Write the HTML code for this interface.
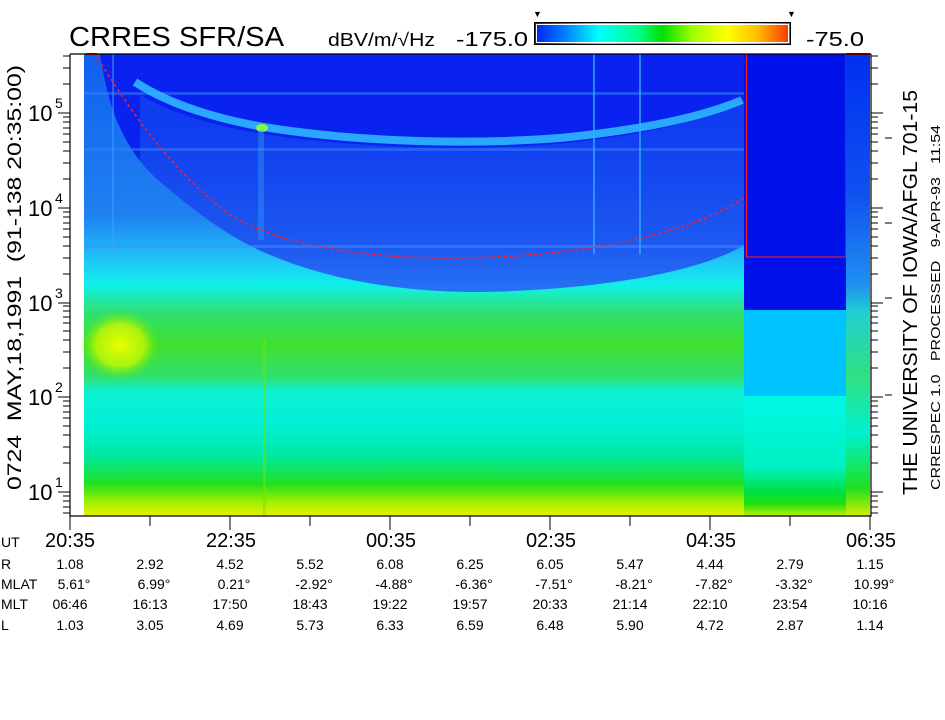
<!DOCTYPE html>
<html><head><meta charset="utf-8"><style>
html,body{margin:0;padding:0;background:#fff;width:945px;height:720px;overflow:hidden}
svg{display:block}
text{font-family:"Liberation Sans",sans-serif;fill:#000;white-space:pre}
</style></head><body>
<svg width="945" height="720" viewBox="0 0 945 720" xmlns="http://www.w3.org/2000/svg">
<defs>
<linearGradient id="cb" x1="0" x2="1" y1="0" y2="0">
<stop offset="0" stop-color="#0020f0"/><stop offset="0.12" stop-color="#0080ff"/><stop offset="0.25" stop-color="#00ffff"/>
<stop offset="0.4" stop-color="#00ff90"/><stop offset="0.5" stop-color="#00e000"/><stop offset="0.62" stop-color="#a0ff00"/>
<stop offset="0.75" stop-color="#ffff00"/><stop offset="0.87" stop-color="#ffc000"/><stop offset="1" stop-color="#ff3000"/>
</linearGradient>
<linearGradient id="low" x1="0" x2="0" y1="54" y2="516" gradientUnits="userSpaceOnUse">
<stop offset="0" stop-color="#1060f0"/>
<stop offset="0.35" stop-color="#2080f0"/>
<stop offset="0.45" stop-color="#20c8f8"/>
<stop offset="0.5" stop-color="#10f0e8"/>
<stop offset="0.56" stop-color="#30e070"/>
<stop offset="0.63" stop-color="#40e030"/>
<stop offset="0.7" stop-color="#30e070"/>
<stop offset="0.73" stop-color="#10f0d0"/>
<stop offset="0.8" stop-color="#00f0d8"/>
<stop offset="0.87" stop-color="#00e8a0"/>
<stop offset="0.93" stop-color="#20e020"/>
<stop offset="0.97" stop-color="#a0f000"/>
<stop offset="1" stop-color="#e8f000"/>
</linearGradient>
<linearGradient id="mid" x1="0" x2="0" y1="130" y2="300" gradientUnits="userSpaceOnUse">
<stop offset="0" stop-color="#1040f0"/><stop offset="0.7" stop-color="#2060f0"/><stop offset="1" stop-color="#2a80f4"/>
</linearGradient>
<linearGradient id="blk" x1="0" x2="0" y1="396" y2="516" gradientUnits="userSpaceOnUse">
<stop offset="0" stop-color="#00f8e8"/><stop offset="0.6" stop-color="#00f0c0"/><stop offset="0.8" stop-color="#00e040"/><stop offset="0.9" stop-color="#20e010"/><stop offset="1" stop-color="#c0f000"/>
</linearGradient>
<linearGradient id="rs" x1="0" x2="0" y1="54" y2="516" gradientUnits="userSpaceOnUse">
<stop offset="0" stop-color="#0030f0"/><stop offset="0.3" stop-color="#1050f0"/><stop offset="0.5" stop-color="#2090f0"/><stop offset="0.56" stop-color="#20d0d0"/><stop offset="0.7" stop-color="#30e080"/><stop offset="0.82" stop-color="#00f0d0"/><stop offset="0.94" stop-color="#20e020"/><stop offset="1" stop-color="#d0f000"/>
</linearGradient>
<radialGradient id="yb" cx="0.5" cy="0.5" r="0.5"><stop offset="0" stop-color="#e8ff00"/><stop offset="0.6" stop-color="#c8f800" stop-opacity="0.8"/><stop offset="1" stop-color="#60e800" stop-opacity="0"/></radialGradient>
</defs>

<rect x="84" y="54" width="660" height="462" fill="#0a22f0"/>
<path d="M140,95 C200,130 300,145 450,148 C600,148 700,125 744,100 L744,300 L140,300Z" fill="url(#mid)" opacity="0.9"/>
<path d="M84,54 L100,54 C110,120 130,160 170,190 C200,215 230,238 270,255 C330,280 400,292 480,292 C600,290 700,272 744,245 L744,516 L84,516 Z" fill="url(#low)"/>
<path d="M84,54 L100,54 C105,100 115,150 130,180 L130,516 L84,516Z" fill="url(#low)" opacity="0.7"/>
<rect x="84" y="92" width="660" height="3" fill="#3a80ff" opacity="0.5"/>
<rect x="84" y="148" width="660" height="3" fill="#3a80ff" opacity="0.5"/>
<rect x="84" y="245" width="660" height="3" fill="#4090ff" opacity="0.5"/>
<ellipse cx="120" cy="345" rx="40" ry="35" fill="url(#yb)"/>
<path d="M135,82 C170,105 220,120 270,128 C360,142 470,145 560,138 C640,130 700,118 742,100" stroke="#30c0ff" stroke-width="8" fill="none" opacity="0.85"/>
<ellipse cx="262" cy="128" rx="6" ry="4" fill="#80ff40"/>
<rect x="258" y="130" width="6" height="110" fill="#30a0f8" opacity="0.4"/>
<rect x="593" y="54" width="2" height="200" fill="#30b0ff" opacity="0.7"/>
<rect x="639" y="54" width="2" height="200" fill="#30b0ff" opacity="0.7"/>
<rect x="112" y="54" width="2" height="200" fill="#40a0ff" opacity="0.5"/>
<rect x="263" y="340" width="3" height="176" fill="#80e000" opacity="0.5"/>
<path d="M95,54 C130,110 170,170 230,215 C290,250 380,258 450,258 C560,258 680,240 744,198" stroke="#ff2020" stroke-width="1.5" fill="none" stroke-dasharray="3,3"/>
<rect x="86" y="53" width="11" height="2" fill="#ff0000"/>
<rect x="744" y="54" width="102" height="256" fill="#0010e8"/>
<rect x="744" y="310" width="102" height="86" fill="#00c4ff"/>
<rect x="744" y="396" width="102" height="120" fill="url(#blk)"/>
<path d="M746.5,54 V257 H846 V54" stroke="#ff2020" fill="none" stroke-width="1"/>
<rect x="846" y="54" width="24" height="462" fill="url(#rs)"/>
<rect x="846" y="53" width="24" height="2" fill="#ff0000"/>

<path d="M70,54 H871 M70,54 V516 H871 V54" stroke="#000" stroke-width="1.2" fill="none"/>
<path stroke="#000" stroke-width="1" fill="none" d="M58,113H70M58,208H70M58,303H70M58,397H70M58,492H70
M63,513H70M63,507H70M63,501H70M63,496H70
M63,463H70M63,447H70M63,435H70M63,426H70M63,418H70M63,412H70M63,406H70M63,401H70
M63,368H70M63,352H70M63,340H70M63,331H70M63,323H70M63,317H70M63,311H70M63,306H70
M63,274H70M63,258H70M63,246H70M63,237H70M63,229H70M63,223H70M63,217H70M63,212H70
M63,179H70M63,163H70M63,151H70M63,142H70M63,134H70M63,128H70M63,122H70M63,117H70
M63,84H70M63,68H70M63,56H70"/>
<path stroke="#000" stroke-width="1" fill="none" d="M871,113H883M871,208H883M871,303H883M871,397H883M871,492H883
M871,513H878M871,507H878M871,501H878M871,496H878
M871,463H878M871,447H878M871,435H878M871,426H878M871,418H878M871,412H878M871,406H878M871,401H878
M871,368H878M871,352H878M871,340H878M871,331H878M871,323H878M871,317H878M871,311H878M871,306H878
M871,274H878M871,258H878M871,246H878M871,237H878M871,229H878M871,223H878M871,217H878M871,212H878
M871,179H878M871,163H878M871,151H878M871,142H878M871,134H878M871,128H878M871,122H878M871,117H878
M871,84H878M871,68H878M871,56H878
M885,138H892M885,223H892M885,298H892M885,395H892"/>
<path stroke="#000" stroke-width="1" d="M70,516V530M150,516V526M230,516V530M310,516V526M390,516V530M470,516V526M550,516V530M630,516V526M710,516V530M790,516V526M870,516V530"/>

<g font-size="22">
<text x="28" y="121">10</text><text x="55" y="108" font-size="14">5</text>
<text x="28" y="216">10</text><text x="55" y="203" font-size="14">4</text>
<text x="28" y="311">10</text><text x="55" y="298" font-size="14">3</text>
<text x="28" y="405">10</text><text x="55" y="392" font-size="14">2</text>
<text x="28" y="500">10</text><text x="55" y="487" font-size="14">1</text>
</g>
<text transform="translate(21,490) rotate(-90)" font-size="19" textLength="425" lengthAdjust="spacingAndGlyphs">0724  MAY,18,1991  (91-138 20:35:00)</text>
<text transform="translate(917,495) rotate(-90)" font-size="20" textLength="405" lengthAdjust="spacingAndGlyphs">THE UNIVERSITY OF IOWA/AFGL 701-15</text>
<text transform="translate(940,490) rotate(-90)" font-size="13" textLength="365" lengthAdjust="spacingAndGlyphs">CRRESPEC 1.0   PROCESSED   9-APR-93   11:54</text>

<text x="69" y="46" font-size="28" textLength="215" lengthAdjust="spacingAndGlyphs">CRRES SFR/SA</text>
<text x="328" y="46" font-size="18" textLength="107" lengthAdjust="spacingAndGlyphs">dBV/m/√Hz</text>
<text x="456" y="46" font-size="20" textLength="72" lengthAdjust="spacingAndGlyphs">-175.0</text>
<text x="806" y="46" font-size="20" textLength="58" lengthAdjust="spacingAndGlyphs">-75.0</text>
<rect x="534.5" y="22.5" width="256" height="22" fill="url(#cb)" stroke="#000" stroke-width="1"/>
<rect x="536.5" y="24.5" width="252" height="18" fill="none" stroke="#fff" stroke-width="1"/>
<text x="533" y="17" font-size="9">▼</text><text x="787" y="17" font-size="9">▼</text>

<g font-size="20">
<text x="70" y="547" text-anchor="middle">20:35</text>
<text x="231" y="547" text-anchor="middle">22:35</text>
<text x="391" y="547" text-anchor="middle">00:35</text>
<text x="551" y="547" text-anchor="middle">02:35</text>
<text x="711" y="547" text-anchor="middle">04:35</text>
<text x="871" y="547" text-anchor="middle">06:35</text>
</g>
<g font-size="14">
<text x="1" y="547">UT</text>
<text x="1" y="569">R</text><text x="1" y="589">MLAT</text><text x="1" y="609">MLT</text><text x="1" y="630">L</text>
</g>
<g font-size="14" text-anchor="middle">
<text x="70" y="569">1.08</text><text x="150" y="569">2.92</text><text x="230" y="569">4.52</text><text x="310" y="569">5.52</text><text x="390" y="569">6.08</text><text x="470" y="569">6.25</text><text x="550" y="569">6.05</text><text x="630" y="569">5.47</text><text x="710" y="569">4.44</text><text x="790" y="569">2.79</text><text x="870" y="569">1.15</text>
<text x="74" y="589">5.61°</text><text x="154" y="589">6.99°</text><text x="234" y="589">0.21°</text><text x="314" y="589">-2.92°</text><text x="394" y="589">-4.88°</text><text x="474" y="589">-6.36°</text><text x="554" y="589">-7.51°</text><text x="634" y="589">-8.21°</text><text x="714" y="589">-7.82°</text><text x="794" y="589">-3.32°</text><text x="874" y="589">10.99°</text>
<text x="70" y="609">06:46</text><text x="150" y="609">16:13</text><text x="230" y="609">17:50</text><text x="310" y="609">18:43</text><text x="390" y="609">19:22</text><text x="470" y="609">19:57</text><text x="550" y="609">20:33</text><text x="630" y="609">21:14</text><text x="710" y="609">22:10</text><text x="790" y="609">23:54</text><text x="870" y="609">10:16</text>
<text x="70" y="630">1.03</text><text x="150" y="630">3.05</text><text x="230" y="630">4.69</text><text x="310" y="630">5.73</text><text x="390" y="630">6.33</text><text x="470" y="630">6.59</text><text x="550" y="630">6.48</text><text x="630" y="630">5.90</text><text x="710" y="630">4.72</text><text x="790" y="630">2.87</text><text x="870" y="630">1.14</text>
</g>
</svg>
</body></html>
